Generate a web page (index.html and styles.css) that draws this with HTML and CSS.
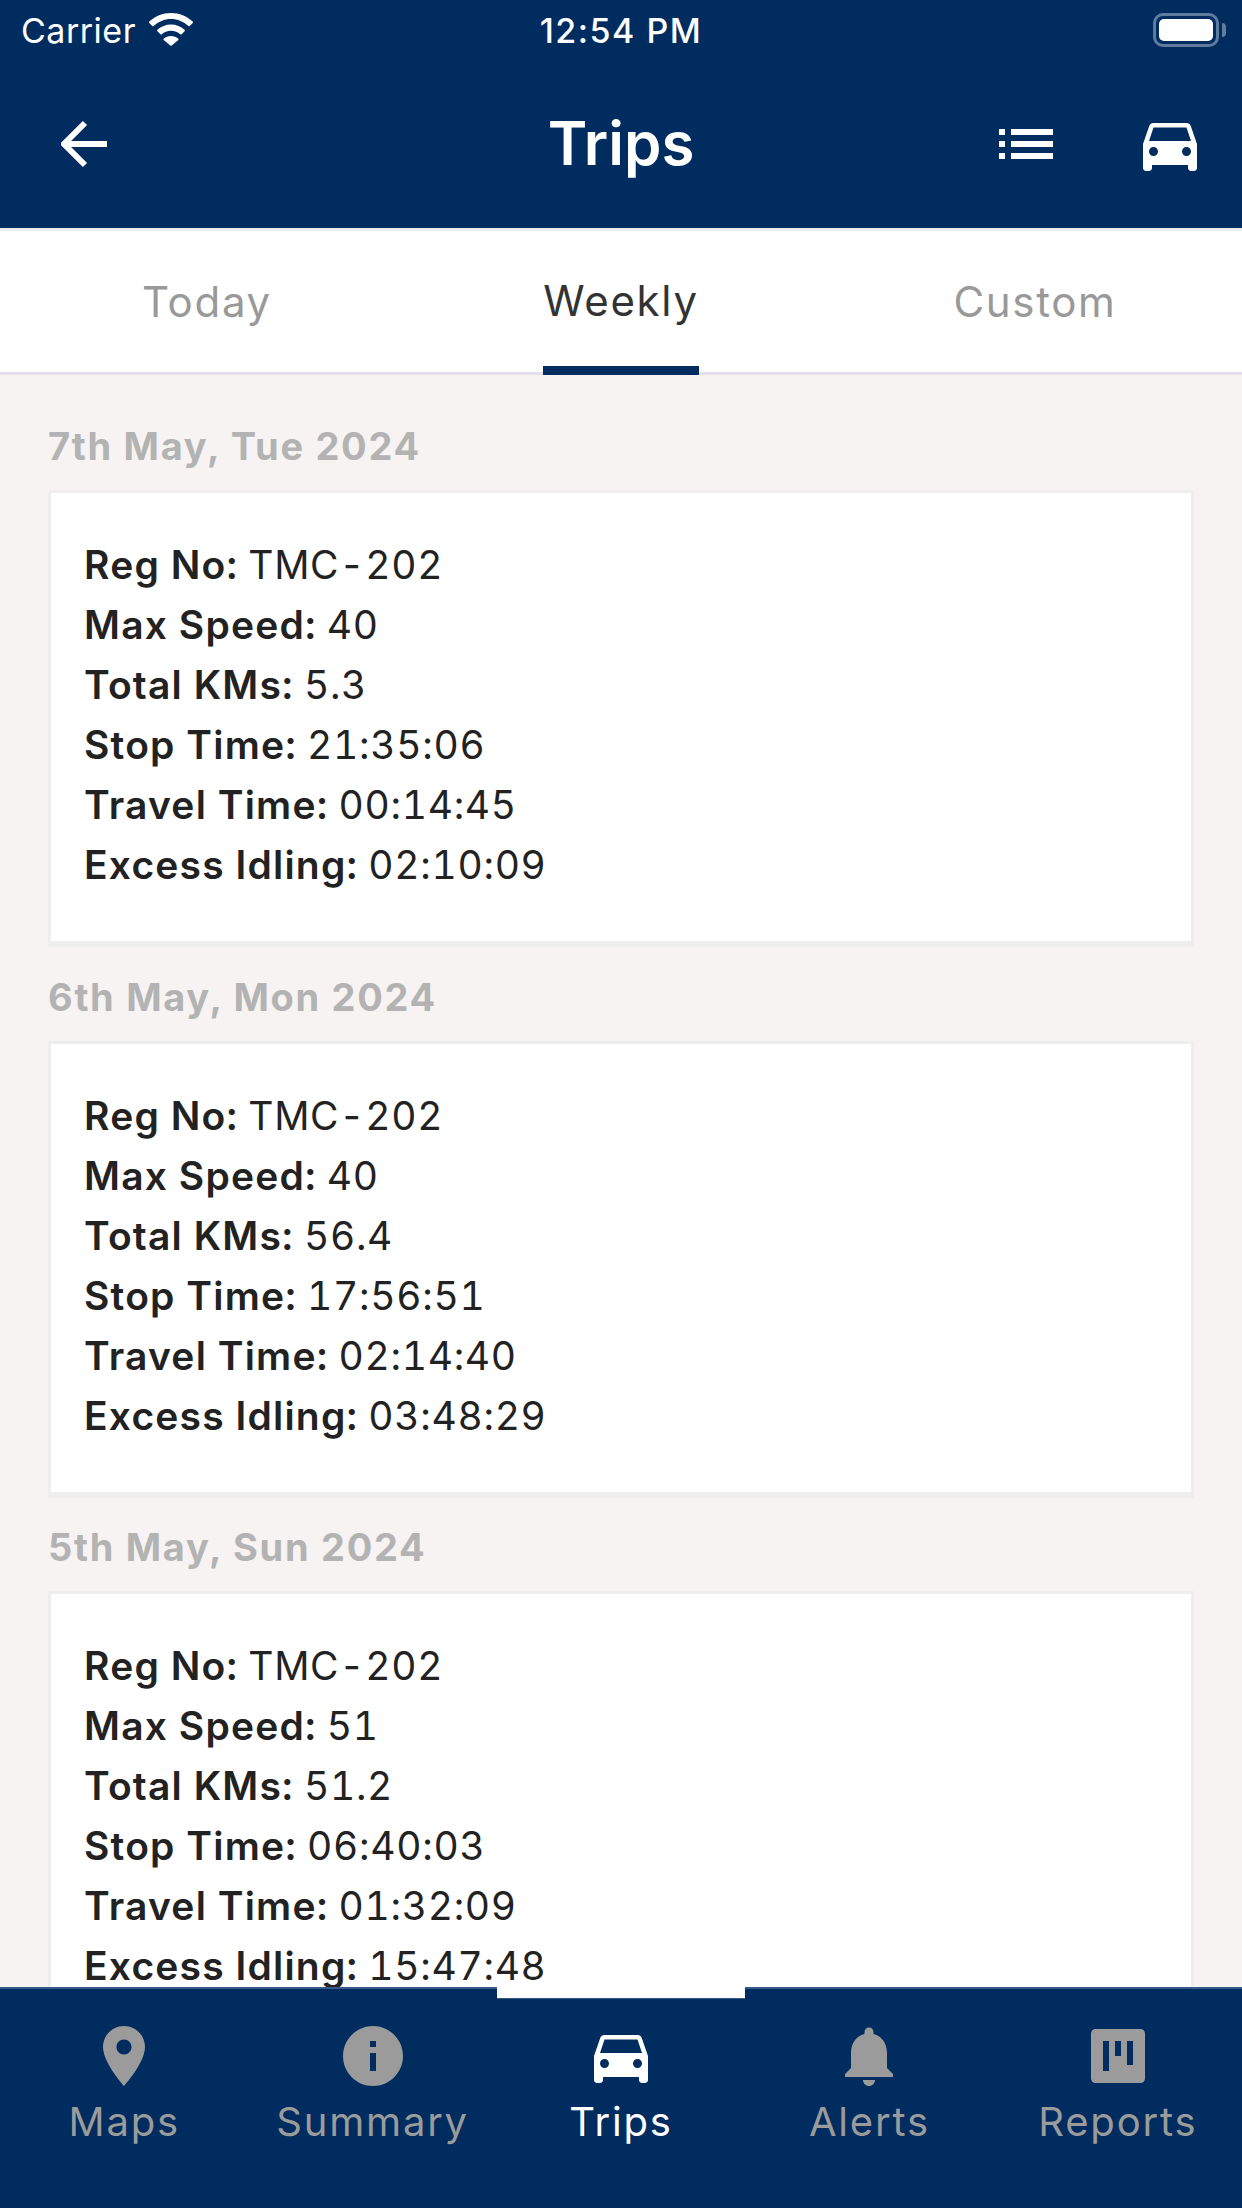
FILE: index.html
```html
<!DOCTYPE html>
<html lang="en">
<head>
<meta charset="utf-8">
<title>Trips</title>
<link rel="stylesheet" href="styles.css">
</head>
<body>
<div class="app">
  <header class="top">
    <div class="status">
      <div class="status-left">
        <span class="carrier">Carrier</span>
        <svg class="wifi" viewBox="0 0 44 33"><path d="M22 0C13.6 0 6 3.2.3 8.6c-.4.4-.4 1 0 1.4l3 3c.4.4 1 .4 1.4 0C9.3 8.7 15.4 6 22 6s12.700 2.700 17.300 7c.4.4 1 .4 1.400 0l3-3c.4-.4.4-1 0-1.400C38 3.200 30.400 0 22 0z"/><path d="M22 11.500c-5.200 0-10 2-13.600 5.300-.4.400-.4 1 0 1.400l3 3c.4.400 1 .400 1.400 0 2.400-2.100 5.600-3.400 9.200-3.400s6.800 1.300 9.200 3.400c.4.400 1 .400 1.400 0l3-3c.4-.4.400-1 0-1.400C32 13.500 27.200 11.500 22 11.500z"/><path d="M22 23c-2.800 0-5.300 1-7.300 2.700-.4.400-.4 1 0 1.400l6.600 5.500c.4.300 1 .300 1.400 0l6.600-5.500c.4-.4.400-1 0-1.400C27.300 24 24.800 23 22 23z"/></svg>
      </div>
      <span class="clock">12:54 PM</span>
      <div class="battery"><span class="battery-fill"></span></div>
    </div>
    <nav class="nav">
      <svg class="back" viewBox="0 0 48 48"><path d="M46 24H3M24 3 3 24l21 21" fill="none" stroke="#fff" stroke-width="6"/></svg>
      <h1 class="title">Trips</h1>
      <div class="nav-actions">
        <svg class="list" viewBox="0 0 54 30"><path d="M0 0h6v6H0zM12 0h42v6H12zM0 12h6v6H0zM12 12h42v6H12zM0 24h6v6H0zM12 24h42v6H12z"/></svg>
        <svg class="icon icon-white" viewBox="0 0 24 24"><use href="#car"/></svg>
      </div>
    </nav>
  </header>

  <div class="tabs">
    <div class="tab">Today</div>
    <div class="tab tab-active"><span class="tab-label">Weekly</span></div>
    <div class="tab">Custom</div>
  </div>

  <main class="list-area">
    <section class="day">
      <h2 class="date">7th May, Tue 2024</h2>
      <div class="card">
        <p class="row"><b>Reg No:</b> TMC-202</p>
        <p class="row"><b>Max Speed:</b> 40</p>
        <p class="row"><b>Total KMs:</b> 5.3</p>
        <p class="row"><b>Stop Time:</b> 21:35:06</p>
        <p class="row"><b>Travel Time:</b> 00:14:45</p>
        <p class="row"><b>Excess Idling:</b> 02:10:09</p>
      </div>
    </section>
    <section class="day">
      <h2 class="date">6th May, Mon 2024</h2>
      <div class="card">
        <p class="row"><b>Reg No:</b> TMC-202</p>
        <p class="row"><b>Max Speed:</b> 40</p>
        <p class="row"><b>Total KMs:</b> 56.4</p>
        <p class="row"><b>Stop Time:</b> 17:56:51</p>
        <p class="row"><b>Travel Time:</b> 02:14:40</p>
        <p class="row"><b>Excess Idling:</b> 03:48:29</p>
      </div>
    </section>
    <section class="day">
      <h2 class="date">5th May, Sun 2024</h2>
      <div class="card">
        <p class="row"><b>Reg No:</b> TMC-202</p>
        <p class="row"><b>Max Speed:</b> 51</p>
        <p class="row"><b>Total KMs:</b> 51.2</p>
        <p class="row"><b>Stop Time:</b> 06:40:03</p>
        <p class="row"><b>Travel Time:</b> 01:32:09</p>
        <p class="row"><b>Excess Idling:</b> 15:47:48</p>
      </div>
    </section>
  </main>

  <footer class="tabbar">
    <div class="bar-item">
      <svg class="icon" viewBox="0 0 24 24"><path d="M12 2C8.130 2 5 5.130 5 9c0 5.250 7 13 7 13s7-7.750 7-13c0-3.870-3.130-7-7-7zm0 9.500c-1.380 0-2.500-1.120-2.500-2.500s1.120-2.500 2.500-2.500 2.500 1.120 2.500 2.500-1.120 2.500-2.500 2.500z"/></svg>
      <span class="bar-label">Maps</span>
    </div>
    <div class="bar-item">
      <svg class="icon" viewBox="0 0 24 24"><path d="M12 2C6.480 2 2 6.480 2 12s4.480 10 10 10 10-4.480 10-10S17.520 2 12 2zm1 15h-2v-6h2v6zm0-8h-2V7h2v2z"/></svg>
      <span class="bar-label">Summary</span>
    </div>
    <div class="bar-item bar-active">
      <span class="notch"></span>
      <svg class="icon" viewBox="0 0 24 24"><use href="#car"/></svg>
      <span class="bar-label">Trips</span>
    </div>
    <div class="bar-item">
      <svg class="icon" viewBox="0 0 24 24"><path d="M12 22c1.100 0 2-.9 2-2h-4c0 1.100.89 2 2 2zm6-6v-5c0-3.070-1.640-5.640-4.500-6.320V4c0-.83-.67-1.500-1.500-1.500s-1.500.67-1.500 1.500v.68C7.630 5.360 6 7.920 6 11v5l-2 2v1h16v-1l-2-2z"/></svg>
      <span class="bar-label">Alerts</span>
    </div>
    <div class="bar-item">
      <svg class="icon" viewBox="0 0 24 24"><path fill-rule="evenodd" d="M4.500 3h15A1.500 1.500 0 0 1 21 4.500v15a1.500 1.500 0 0 1-1.500 1.500h-15A1.500 1.500 0 0 1 3 19.500v-15A1.500 1.500 0 0 1 4.500 3zM7 7v10h2V7zm4 0v5h2V7zm4 0v8h2V7z"/></svg>
      <span class="bar-label">Reports</span>
    </div>
  </footer>
</div>

<svg class="defs" aria-hidden="true"><defs><path id="car" d="M18.920 6.010C18.720 5.420 18.160 5 17.500 5h-11c-.66 0-1.210.42-1.420 1.010L3 12v8c0 .55.45 1 1 1h1c.55 0 1-.45 1-1v-1h12v1c0 .55.45 1 1 1h1c.55 0 1-.45 1-1v-8l-2.080-5.990zM6.500 16c-.83 0-1.500-.67-1.500-1.500S5.670 13 6.500 13s1.500.67 1.500 1.500S7.330 16 6.500 16zm11 0c-.83 0-1.500-.67-1.500-1.500s.67-1.500 1.500-1.500 1.500.67 1.500 1.500-.67 1.500-1.500 1.500zM5 11l1.500-4.500h11L19 11H5z"/></defs></svg>
</body>
</html>
```
FILE: styles.css
```css
* { box-sizing: border-box; }
html, body { margin: 0; padding: 0; overflow: hidden; }
body { width: 1242px; height: 2208px; font-family: Inter, "Noto Sans", sans-serif; font-feature-settings: "calt" 0; }
.defs { width: 0; height: 0; display: block; }

.app { width: 1242px; height: 2208px; display: flex; flex-direction: column; overflow: hidden; background: #f6f3f2; }

.top { height: 228px; background: #002c5f; color: #fff; flex: none; }
.status { height: 62px; display: grid; grid-template-columns: 1fr auto 1fr; align-items: center; padding: 0 21px; }
.status-left { display: flex; align-items: center; gap: 13px; }
.carrier { font-size: 34px; line-height: 62px; letter-spacing: 0.5px; }
.wifi { width: 44px; height: 33px; fill: #fff; margin-top: -3px; }
.clock { font-size: 34px; font-weight: 500; line-height: 62px; letter-spacing: 1.5px; }
.battery { justify-self: end; width: 66px; height: 34px; border: 3px solid #5f7b9e; border-radius: 10px; padding: 3px; position: relative; margin-right: 2px; margin-top: -2px; }
.battery::after { content: ""; position: absolute; left: 66px; top: 7px; width: 4px; height: 14px; background: #5f7b9e; border-radius: 0 4px 4px 0; }
.battery-fill { display: block; height: 100%; background: #fff; border-radius: 5px; }

.nav { height: 166px; display: grid; grid-template-columns: 1fr auto 1fr; align-items: center; padding: 0 36px 2px; }
.back { width: 48px; height: 48px; margin-left: 25px; }
.title { margin: 0; padding-bottom: 3px; font-size: 60px; font-weight: 600; line-height: 72px; }
.nav-actions { justify-self: end; display: flex; align-items: center; gap: 81px; }
.list { width: 54px; height: 30px; fill: #fff; }
.icon { width: 72px; height: 72px; fill: #9b9b9b; display: block; flex: none; }
.icon-white { fill: #fff; }

.tabs { flex: none; height: 147px; display: grid; grid-template-columns: repeat(3, 1fr); background: #fff; border-top: 3px solid #ececec; border-bottom: 3px solid #e4e0ea; }
.tab { display: flex; justify-content: center; align-items: center; font-size: 42px; font-weight: 400; letter-spacing: 1.7px; color: #999; height: 144px; padding-bottom: 4px; }
.tab-active { color: #333; }
.tab-label { height: 144px; line-height: 140px; border-bottom: 9px solid #002c5f; margin-bottom: -4px; }

.list-area { flex: 1; min-height: 0; overflow: hidden; padding: 0 48px; }
.day { height: 550.5px; padding-top: 48px; }
.date { margin: 0 0 21px; font-size: 38px; font-weight: 700; line-height: 46px; letter-spacing: 1.7px; color: #b3b3b3; }
.card { background: #fff; border: 3px solid #eeeeee; border-bottom-width: 6px; height: 457px; padding: 42px 33px; }
.row { margin: 0; font-size: 39px; line-height: 60px; letter-spacing: 0.7px; word-spacing: -1px; color: #222; font-variant-numeric: tabular-nums; }
.row b { font-weight: 600; letter-spacing: 1.2px; }

.tabbar { flex: none; height: 221px; background: #002c5f; border-top: 2px solid #34598a; display: grid; grid-template-columns: repeat(5, 1fr); position: relative; }
.bar-item { display: flex; flex-direction: column; align-items: center; padding-top: 31px; position: relative; }
.notch { position: absolute; left: 0; right: 0; top: -2px; height: 12px; background: #fff; border-bottom: 1px solid #34598a; }
.bar-label { font-size: 40px; line-height: 48px; letter-spacing: 1.8px; color: #9b9b9b; margin-top: 6px; }
.bar-active .icon { fill: #fff; }
.bar-active .bar-label { color: #fff; }
```
